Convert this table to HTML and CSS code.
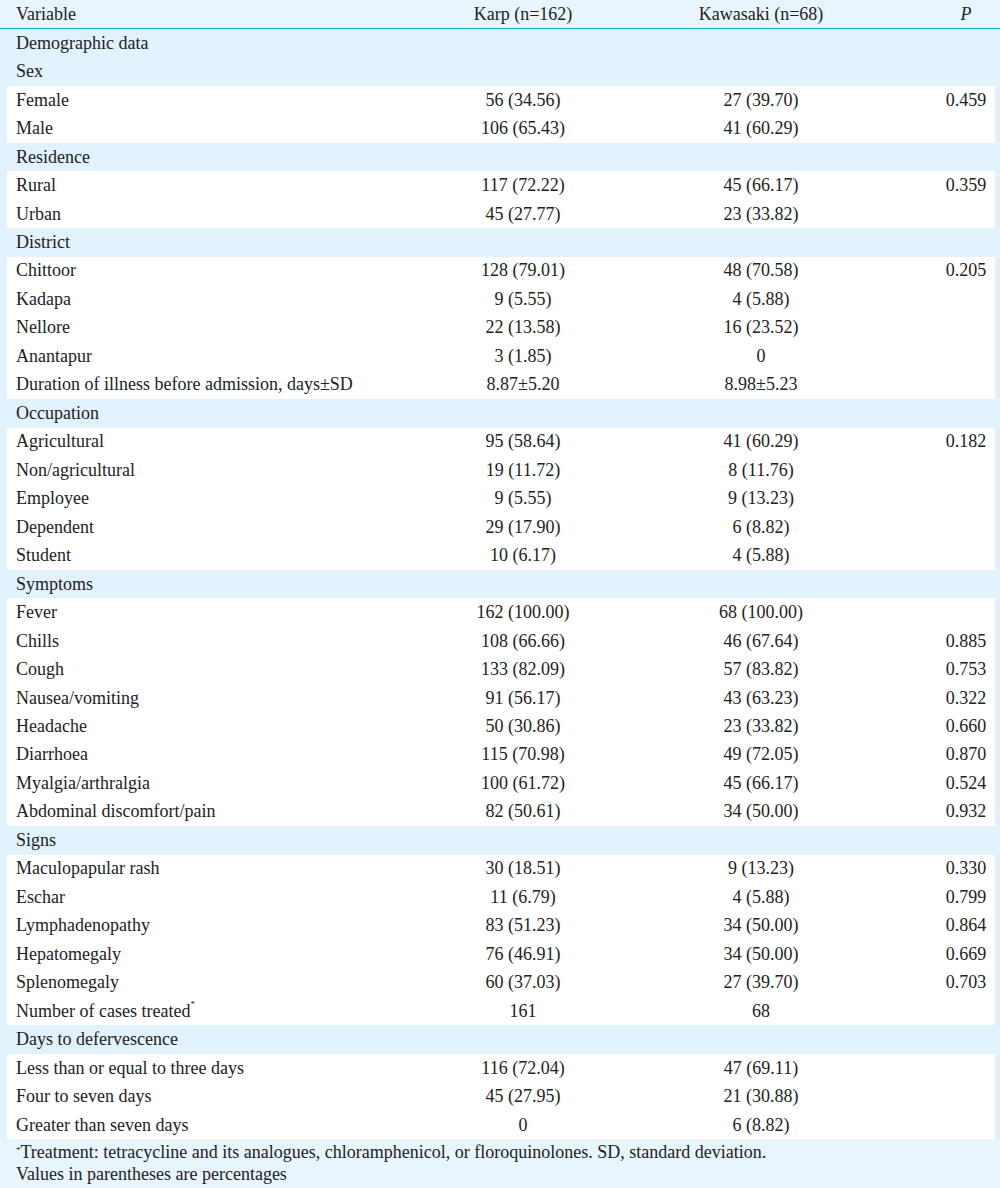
FILE: index.html
```html
<!DOCTYPE html>
<html>
<head>
<meta charset="utf-8">
<link rel="stylesheet" href="styles.css">
</head>
<body>
<div class="page">
<table class="data">
<colgroup>
<col class="c-var"><col class="c-karp"><col class="c-kaw"><col class="c-p">
</colgroup>
<thead>
<tr><th class="var">Variable</th><th>Karp (n=162)</th><th>Kawasaki (n=68)</th><th class="p"><i>P</i></th></tr>
</thead>
<tbody>
<tr class="sec"><td class="var">Demographic data</td><td></td><td></td><td class="p"></td></tr>
<tr class="sec"><td class="var">Sex</td><td></td><td></td><td class="p"></td></tr>
<tr><td class="var">Female</td><td>56 (34.56)</td><td>27 (39.70)</td><td class="p">0.459</td></tr>
<tr><td class="var">Male</td><td>106 (65.43)</td><td>41 (60.29)</td><td class="p"></td></tr>
<tr class="sec"><td class="var">Residence</td><td></td><td></td><td class="p"></td></tr>
<tr><td class="var">Rural</td><td>117 (72.22)</td><td>45 (66.17)</td><td class="p">0.359</td></tr>
<tr><td class="var">Urban</td><td>45 (27.77)</td><td>23 (33.82)</td><td class="p"></td></tr>
<tr class="sec"><td class="var">District</td><td></td><td></td><td class="p"></td></tr>
<tr><td class="var">Chittoor</td><td>128 (79.01)</td><td>48 (70.58)</td><td class="p">0.205</td></tr>
<tr><td class="var">Kadapa</td><td>9 (5.55)</td><td>4 (5.88)</td><td class="p"></td></tr>
<tr><td class="var">Nellore</td><td>22 (13.58)</td><td>16 (23.52)</td><td class="p"></td></tr>
<tr><td class="var">Anantapur</td><td>3 (1.85)</td><td>0</td><td class="p"></td></tr>
<tr><td class="var">Duration of illness before admission, days±SD</td><td>8.87±5.20</td><td>8.98±5.23</td><td class="p"></td></tr>
<tr class="sec"><td class="var">Occupation</td><td></td><td></td><td class="p"></td></tr>
<tr><td class="var">Agricultural</td><td>95 (58.64)</td><td>41 (60.29)</td><td class="p">0.182</td></tr>
<tr><td class="var">Non/agricultural</td><td>19 (11.72)</td><td>8 (11.76)</td><td class="p"></td></tr>
<tr><td class="var">Employee</td><td>9 (5.55)</td><td>9 (13.23)</td><td class="p"></td></tr>
<tr><td class="var">Dependent</td><td>29 (17.90)</td><td>6 (8.82)</td><td class="p"></td></tr>
<tr><td class="var">Student</td><td>10 (6.17)</td><td>4 (5.88)</td><td class="p"></td></tr>
<tr class="sec"><td class="var">Symptoms</td><td></td><td></td><td class="p"></td></tr>
<tr><td class="var">Fever</td><td>162 (100.00)</td><td>68 (100.00)</td><td class="p"></td></tr>
<tr><td class="var">Chills</td><td>108 (66.66)</td><td>46 (67.64)</td><td class="p">0.885</td></tr>
<tr><td class="var">Cough</td><td>133 (82.09)</td><td>57 (83.82)</td><td class="p">0.753</td></tr>
<tr><td class="var">Nausea/vomiting</td><td>91 (56.17)</td><td>43 (63.23)</td><td class="p">0.322</td></tr>
<tr><td class="var">Headache</td><td>50 (30.86)</td><td>23 (33.82)</td><td class="p">0.660</td></tr>
<tr><td class="var">Diarrhoea</td><td>115 (70.98)</td><td>49 (72.05)</td><td class="p">0.870</td></tr>
<tr><td class="var">Myalgia/arthralgia</td><td>100 (61.72)</td><td>45 (66.17)</td><td class="p">0.524</td></tr>
<tr><td class="var">Abdominal discomfort/pain</td><td>82 (50.61)</td><td>34 (50.00)</td><td class="p">0.932</td></tr>
<tr class="sec"><td class="var">Signs</td><td></td><td></td><td class="p"></td></tr>
<tr><td class="var">Maculopapular rash</td><td>30 (18.51)</td><td>9 (13.23)</td><td class="p">0.330</td></tr>
<tr><td class="var">Eschar</td><td>11 (6.79)</td><td>4 (5.88)</td><td class="p">0.799</td></tr>
<tr><td class="var">Lymphadenopathy</td><td>83 (51.23)</td><td>34 (50.00)</td><td class="p">0.864</td></tr>
<tr><td class="var">Hepatomegaly</td><td>76 (46.91)</td><td>34 (50.00)</td><td class="p">0.669</td></tr>
<tr><td class="var">Splenomegaly</td><td>60 (37.03)</td><td>27 (39.70)</td><td class="p">0.703</td></tr>
<tr><td class="var">Number of cases treated<sup>*</sup></td><td>161</td><td>68</td><td class="p"></td></tr>
<tr class="sec"><td class="var">Days to defervescence</td><td></td><td></td><td class="p"></td></tr>
<tr><td class="var">Less than or equal to three days</td><td>116 (72.04)</td><td>47 (69.11)</td><td class="p"></td></tr>
<tr><td class="var">Four to seven days</td><td>45 (27.95)</td><td>21 (30.88)</td><td class="p"></td></tr>
<tr><td class="var">Greater than seven days</td><td>0</td><td>6 (8.82)</td><td class="p"></td></tr>
</tbody>
</table>
<div class="notes">
<p><sup>*</sup>Treatment: tetracycline and its analogues, chloramphenicol, or floroquinolones. SD, standard deviation.</p>
<p>Values in parentheses are percentages</p>
</div>
</div>
</body>
</html>
```

FILE: styles.css
```css
html, body {
  margin: 0;
  padding: 0;
  background: #e8f5fd;
}
.page {
  width: 1000px;
  min-height: 1188px;
  font-family: "Liberation Serif", "Times New Roman", serif;
  font-size: 18px;
  color: #222;
  background: #e8f5fd;
}
.data {
  width: 1000px;
  border-collapse: collapse;
  table-layout: fixed;
}
.c-var { width: 461px; }
.c-karp { width: 124px; }
.c-kaw { width: 352px; }
.c-p { width: 63px; }
.data th {
  font-weight: normal;
  height: 28px;
  padding: 0;
  text-align: center;
  border-bottom: 1px solid #12aee8;
  background: #e8f5fd;
  vertical-align: middle;
}
.data td {
  height: 28.47px;
  padding: 0;
  text-align: center;
  vertical-align: middle;
  background: #fff;
  white-space: nowrap;
}
.data .var {
  text-align: left;
  padding-left: 16px;
}
.data td.var {
  box-shadow: inset 7px 0 0 #e1f2fc;
}
.data .p {
  padding-right: 5px;
}
.data td.p {
  box-shadow: inset -5px 0 0 #e1f2fc;
}
.data tr.sec td {
  background: #e1f2fc;
  box-shadow: none;
}
sup {
  font-size: 9px;
  vertical-align: top;
  position: relative;
  top: -2px;
}
.notes {
  padding: 2px 0 0 16px;
  line-height: 22px;
}
.notes p {
  margin: 0;
}
```
